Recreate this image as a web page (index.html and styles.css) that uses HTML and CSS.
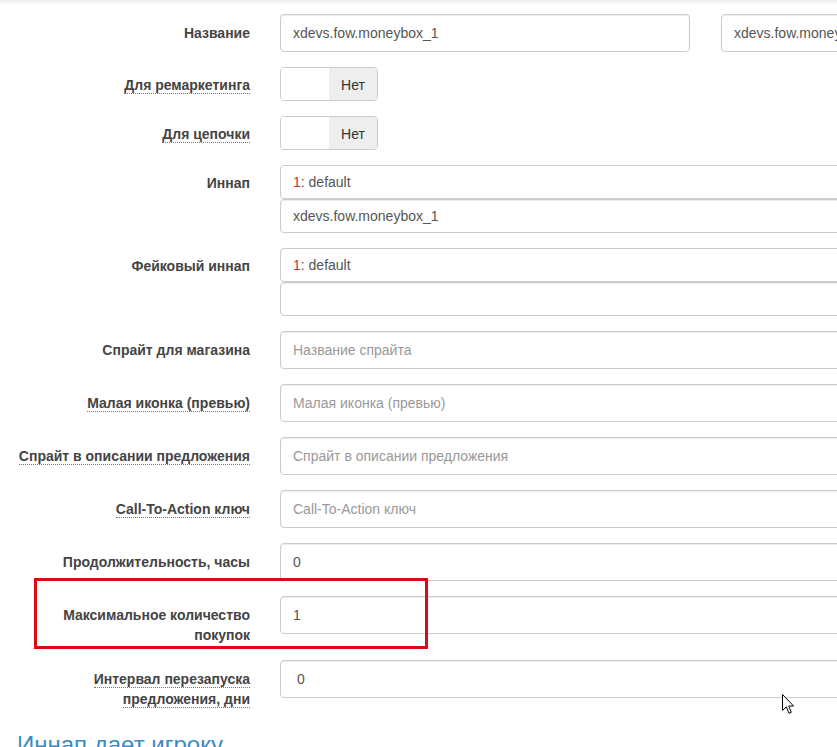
FILE: index.html
```html
<!DOCTYPE html>
<html lang="ru">
<head>
<meta charset="utf-8">
<title>Форма</title>
<link rel="stylesheet" href="styles.css">
</head>
<body>
<div class="topshade"></div>
<div class="page">
  <form class="form">
    <div class="row">
      <label class="label">Название</label>
      <div class="ctrl pair">
        <input class="input tall half" value="xdevs.fow.moneybox_1">
        <input class="input tall half" value="xdevs.fow.moneybox_1">
      </div>
    </div>

    <div class="row">
      <label class="label"><abbr title="Для ремаркетинга">Для ремаркетинга</abbr></label>
      <div class="ctrl">
        <div class="toggle"><span class="toggle-off"></span><span class="toggle-on">Нет</span></div>
      </div>
    </div>

    <div class="row">
      <label class="label"><abbr title="Для цепочки">Для цепочки</abbr></label>
      <div class="ctrl">
        <div class="toggle"><span class="toggle-off"></span><span class="toggle-on">Нет</span></div>
      </div>
    </div>

    <div class="row">
      <label class="label">Иннап</label>
      <div class="ctrl stack">
        <div class="select"><span class="num">1</span>: default</div>
        <input class="input short" value="xdevs.fow.moneybox_1">
      </div>
    </div>

    <div class="row">
      <label class="label">Фейковый иннап</label>
      <div class="ctrl stack">
        <div class="select"><span class="num">1</span>: default</div>
        <input class="input short" value="">
      </div>
    </div>

    <div class="row">
      <label class="label lbl-tall">Спрайт для магазина</label>
      <div class="ctrl"><input class="input tall" placeholder="Название спрайта"></div>
    </div>

    <div class="row">
      <label class="label lbl-tall"><abbr title="Малая иконка (превью)">Малая иконка (превью)</abbr></label>
      <div class="ctrl"><input class="input tall" placeholder="Малая иконка (превью)"></div>
    </div>

    <div class="row">
      <label class="label lbl-tall"><abbr title="Спрайт в описании предложения">Спрайт в описании предложения</abbr></label>
      <div class="ctrl"><input class="input tall" placeholder="Спрайт в описании предложения"></div>
    </div>

    <div class="row">
      <label class="label lbl-tall"><abbr title="Call-To-Action ключ">Call-To-Action ключ</abbr></label>
      <div class="ctrl"><input class="input tall" placeholder="Call-To-Action ключ"></div>
    </div>

    <div class="row">
      <label class="label lbl-tall">Продолжительность, часы</label>
      <div class="ctrl"><input class="input tall" value="0"></div>
    </div>

    <div class="row highlighted">
      <label class="label lbl-tall">Максимальное количество<br>покупок</label>
      <div class="ctrl"><input class="input tall" value="1"></div>
      <div class="mark"></div>
    </div>

    <div class="row">
      <label class="label lbl-tall"><abbr title="Интервал перезапуска предложения, дни">Интервал перезапуска<br>предложения, дни</abbr></label>
      <div class="ctrl"><input class="input tall pad-extra" value="0"></div>
    </div>
  </form>

  <h3 class="section-title">Иннап дает игроку</h3>
</div>

<svg class="cursor" width="13" height="21" viewBox="0 0 13 21" aria-hidden="true">
  <path d="M0.5 0.5 L0.5 16.5 L4.3 12.9 L7 19.3 L9.3 18.3 L6.7 12 L11.6 12 Z" fill="#fff" stroke="#000" stroke-width="1" stroke-linejoin="miter"/>
</svg>
</body>
</html>
```

FILE: styles.css
```css
html, body {
  margin: 0;
  padding: 0;
  background: #fff;
  overflow: hidden;
}

body {
  font-family: "Liberation Sans", Arial, sans-serif;
  font-size: 14px;
  line-height: 20px;
  color: #333;
  width: 837px;
  height: 747px;
  position: relative;
}

.topshade {
  height: 5px;
  background: linear-gradient(#ececec, #fff);
}

.page {
  width: 1400px;
  padding-top: 9px;
}

.form {
  display: flex;
  flex-direction: column;
  gap: 15px;
}

.row {
  display: grid;
  grid-template-columns: 250px 1fr;
  column-gap: 30px;
  align-items: start;
  position: relative;
}

.label {
  text-align: right;
  font-weight: bold;
  color: #444;
  padding-top: 8px;
  line-height: 20px;
}

.row:first-child .label,
.lbl-tall {
  padding-top: 9px;
}

abbr {
  text-decoration: none;
  border-bottom: 1px dotted #777;
  cursor: help;
}

.ctrl {
  display: flex;
}

.pair {
  gap: 31px;
}

.stack {
  flex-direction: column;
}

.input {
  box-sizing: border-box;
  display: block;
  width: 100%;
  height: 34px;
  padding: 6px 12px;
  font: inherit;
  color: #555;
  background: #fff;
  border: 1px solid #ccc;
  border-radius: 4px;
  box-shadow: inset 0 1px 1px rgba(0, 0, 0, .075);
  outline: none;
}

.input::placeholder {
  color: #999;
}

.input.tall {
  height: 38px;
}

.input.half {
  width: 410px;
  flex: none;
}

.pad-extra {
  padding-left: 16px;
}

.select {
  box-sizing: border-box;
  height: 34px;
  padding: 0 12px;
  display: flex;
  align-items: center;
  color: #555;
  border: 1px solid #ccc;
  border-radius: 4px;
  background: #fff;
}

.num {
  color: #c9302c;
}

.toggle {
  display: flex;
  box-sizing: border-box;
  width: 98px;
  height: 34px;
  border: 1px solid #ccc;
  border-radius: 4px;
  overflow: hidden;
}

.toggle-off {
  width: 48px;
  background: #fff;
}

.toggle-on {
  flex: 1;
  background: #eee;
  color: #333;
  display: flex;
  align-items: center;
  justify-content: center;
  padding-top: 1px;
}

.mark {
  position: absolute;
  left: 34px;
  top: -18px;
  width: 394px;
  height: 71px;
  box-sizing: border-box;
  border: 3px solid #dc0a12;
  pointer-events: none;
}

.section-title {
  margin: 23px 0 0 17px;
  font-size: 24px;
  font-weight: normal;
  line-height: 26px;
  color: #3a8bc3;
}

.cursor {
  position: absolute;
  left: 782px;
  top: 694px;
}
```
